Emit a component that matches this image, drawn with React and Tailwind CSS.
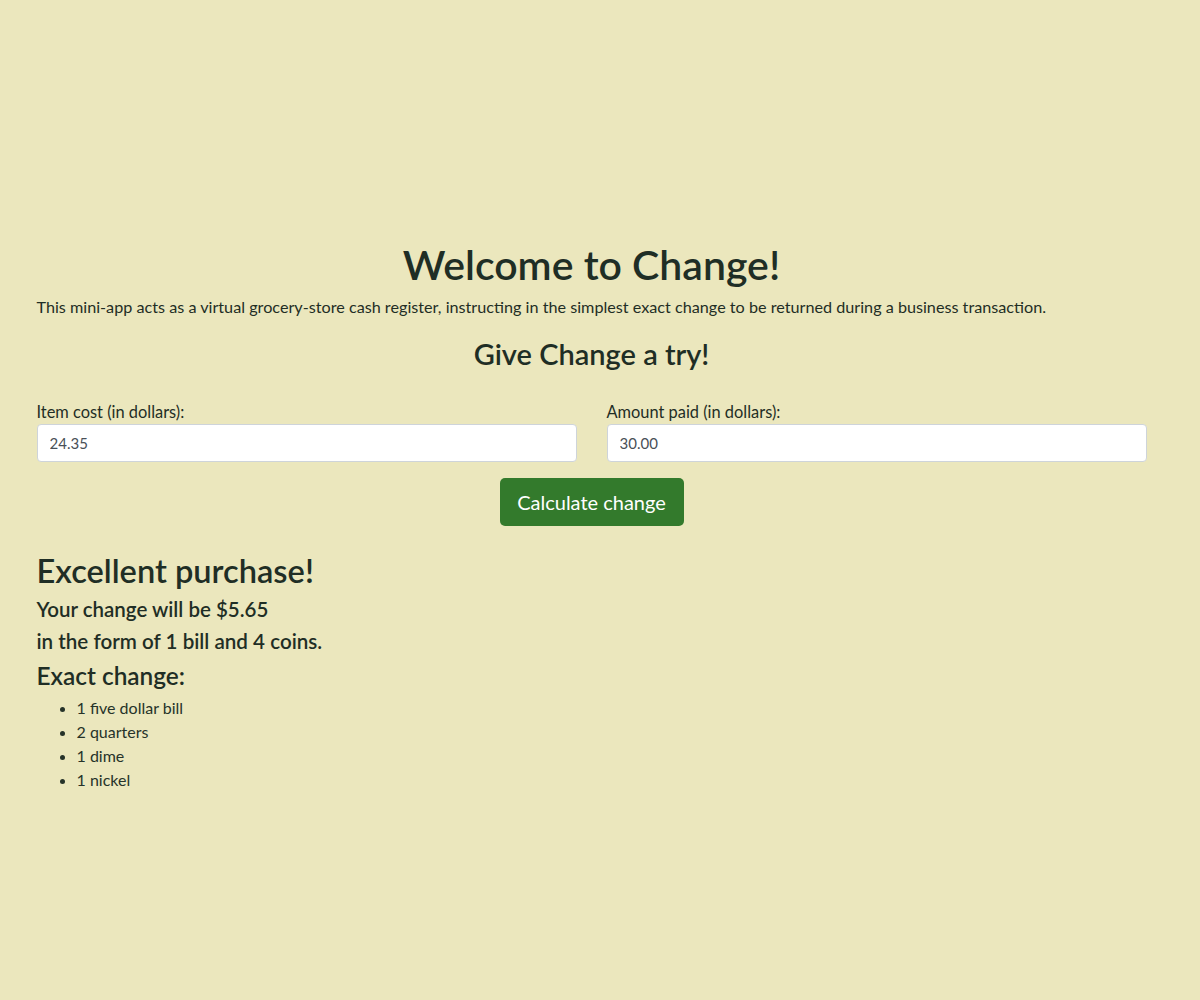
export default function App() {
  return (
    <div className="min-h-[1000px] w-full bg-[#ebe7bd] text-[#1f2e25]" style={{ fontFamily: 'Lato, "Noto Sans", sans-serif' }}>
      <div className="w-[1183px]">
        <div className="mx-auto w-[1110px] pt-[241px]">
          <h1 className="text-center text-[41px] leading-[48px] font-semibold mb-[6px]">Welcome to Change!</h1>
          <p className="text-[16.2px] leading-[24px] mb-[18px]">This mini-app acts as a virtual grocery-store cash register, instructing in the simplest exact change to be returned during a business transaction.</p>
          <h2 className="text-center text-[29px] leading-[34px] font-semibold mb-[29px]">Give Change a try!</h2>
          <div className="grid grid-cols-2 gap-[30px]">
            <div>
              <label className="block text-[16.4px] leading-[24px]">Item cost (in dollars):</label>
              <input readOnly value="24.35" className="block w-full h-[38px] rounded-[4px] border border-[#ced4da] bg-white px-[12px] text-[15px] text-[#495057] outline-none" />
            </div>
            <div>
              <label className="block text-[16.4px] leading-[24px]">Amount paid (in dollars):</label>
              <input readOnly value="30.00" className="block w-full h-[38px] rounded-[4px] border border-[#ced4da] bg-white px-[12px] text-[15px] text-[#495057] outline-none" />
            </div>
          </div>
          <div className="flex justify-center mt-[16px]">
            <button className="h-[48px] w-[184px] rounded-[5px] bg-[#337a2c] text-white text-[20px]">Calculate change</button>
          </div>
          <h3 className="mt-[26px] text-[32.6px] leading-[38px] font-semibold">Excellent purchase!</h3>
          <p className="text-[20.5px] leading-[32px] font-semibold mt-[3px]">Your change will be $5.65</p>
          <p className="text-[20.6px] leading-[32px] font-semibold">in the form of 1 bill and 4 coins.</p>
          <h4 className="text-[24.4px] leading-[30px] font-semibold mt-[4px] mb-[5px]">Exact change:</h4>
          <ul className="list-disc pl-[40px] text-[16px] leading-[24px] text-[#263329]">
            <li>1 five dollar bill</li>
            <li>2 quarters</li>
            <li>1 dime</li>
            <li>1 nickel</li>
          </ul>
        </div>
      </div>
    </div>
  );
}
